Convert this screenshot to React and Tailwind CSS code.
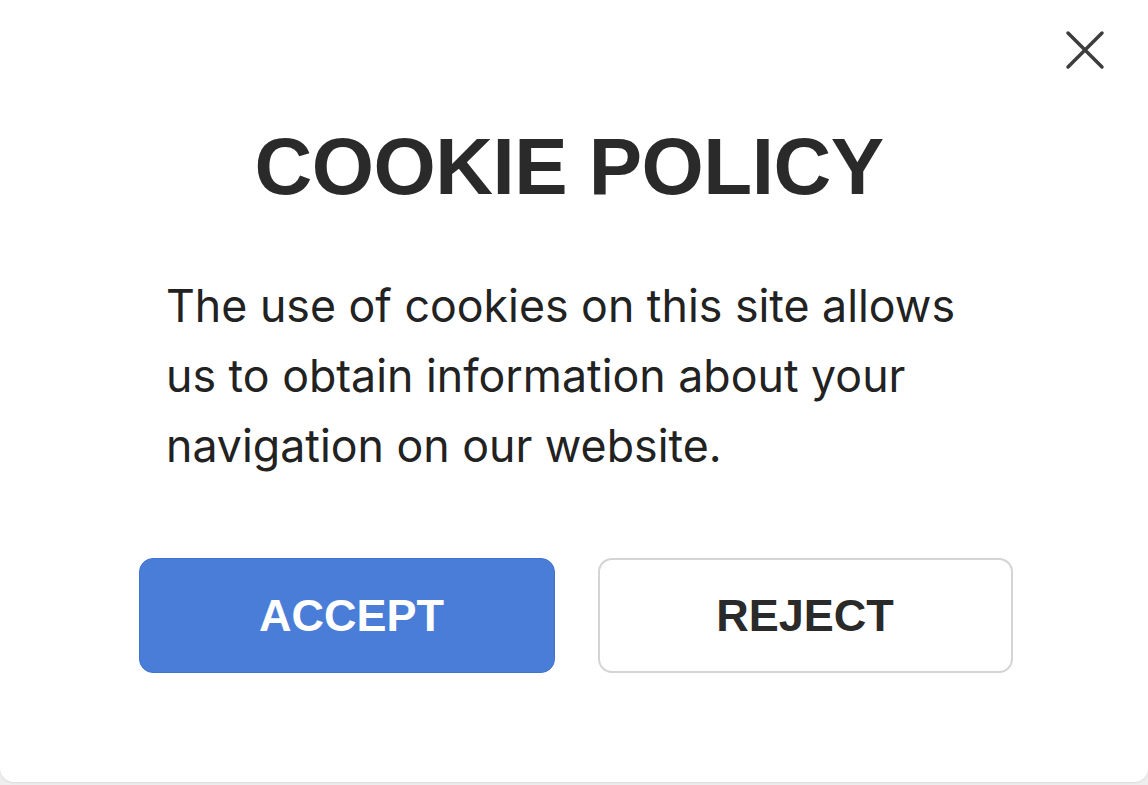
export default function App() {
  return (
    <div className="w-[1148px] h-[785px] bg-[#eeeeee] overflow-hidden">
      <div className="relative w-full h-[782px] bg-white rounded-b-[14px] shadow-[0_1px_2px_rgba(0,0,0,0.08)] flex flex-col items-center">
        <button className="absolute left-[1064px] top-[29px] w-[42px] h-[42px] flex items-center justify-center">
          <svg width="42" height="42" viewBox="0 0 42 42" fill="none">
            <path d="M4 4 L38 38 M38 4 L4 38" stroke="#3d3d3d" strokeWidth="3.5" strokeLinecap="round" />
          </svg>
        </button>
        <h1 className="mt-[122px] ml-[-10px] text-[80px] leading-[90px] font-bold text-[#2a2a2a] tracking-[-0.5px] font-['Liberation_Sans',Arial,sans-serif]">
          COOKIE POLICY
        </h1>
        <p className="mt-[59px] self-start ml-[166px] w-[830px] text-[44.7px] leading-[70px] text-[#222222] font-['Inter',sans-serif]">
          The use of cookies on this site allows us to obtain information about your navigation on our website.
        </p>
        <div className="mt-[77px] flex gap-[43px] ml-[3px]">
          <button className="w-[416px] h-[115px] pl-[10px] rounded-[14px] bg-[#4a7dd8] border border-[#3f73d0] text-white text-[45px] font-bold font-['Liberation_Sans',Arial,sans-serif] flex items-center justify-center">
            ACCEPT
          </button>
          <button className="w-[415px] h-[115px] rounded-[14px] bg-white border-2 border-[#d4d4d4] text-[#2a2a2a] text-[45px] font-bold font-['Liberation_Sans',Arial,sans-serif] flex items-center justify-center">
            REJECT
          </button>
        </div>
      </div>
    </div>
  );
}
